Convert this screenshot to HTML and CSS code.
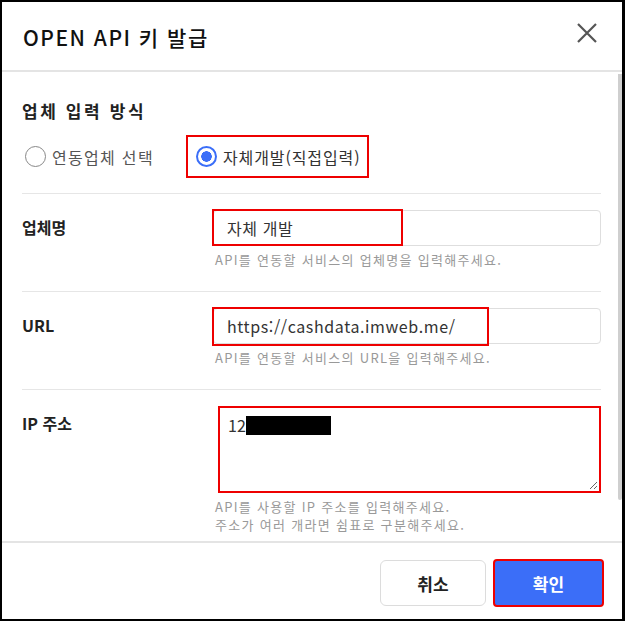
FILE: index.html
```html
<!DOCTYPE html>
<html lang="ko">
<head>
    <meta charset="UTF-8">
    <meta name="viewport" content="width=device-width, initial-scale=1.0">
    <title>OPEN API 키 발급</title>
    <link rel="stylesheet" href="styles.css">
</head>
<body>
    <div class="modal">
        <div class="modal-header">
            <h1>OPEN API 키 발급</h1>
            <button class="close-button" aria-label="닫기">
                <svg width="22" height="22" viewBox="0 0 22 22">
                    <path d="M2 2 L20 20 M20 2 L2 20" stroke="#555" stroke-width="2.2" fill="none"/>
                </svg>
            </button>
        </div>

        <div class="modal-body">
            <div class="body-inner">
                <div class="section">
                    <h2>업체 입력 방식</h2>
                    <div class="radio-group">
                        <label class="radio">
                            <span class="radio-circle"></span>
                            <span>연동업체 선택</span>
                        </label>
                        <label class="radio checked marked">
                            <span class="radio-circle"></span>
                            <span>자체개발(직접입력)</span>
                        </label>
                    </div>
                </div>

                <div class="form-row">
                    <div class="form-label">업체명</div>
                    <div class="form-field">
                        <div class="input-wrap">
                            <div class="input">자체 개발</div>
                            <span class="mark mark-name"></span>
                        </div>
                        <p class="help">API를 연동할 서비스의 업체명을 입력해주세요.</p>
                    </div>
                </div>

                <div class="form-row">
                    <div class="form-label">URL</div>
                    <div class="form-field">
                        <div class="input-wrap">
                            <div class="input">https://cashdata.imweb.me/</div>
                            <span class="mark mark-url"></span>
                        </div>
                        <p class="help">API를 연동할 서비스의 URL을 입력해주세요.</p>
                    </div>
                </div>

                <div class="form-row last">
                    <div class="form-label">IP 주소</div>
                    <div class="form-field">
                        <div class="textarea">
                            <span>12</span><span class="redacted"></span>
                            <svg class="resize" width="9" height="9" viewBox="0 0 9 9">
                                <path d="M8 1 L1 8 M8 5 L5 8" stroke="#666" stroke-width="1" fill="none"/>
                            </svg>
                        </div>
                        <p class="help">API를 사용할 IP 주소를 입력해주세요.<br>주소가 여러 개라면 쉼표로 구분해주세요.</p>
                    </div>
                </div>
            </div>
            <div class="scrollbar"><div class="thumb"></div></div>
        </div>

        <div class="modal-footer">
            <button class="btn btn-cancel">취소</button>
            <button class="btn btn-confirm">확인</button>
        </div>
    </div>
</body>
</html>
```

FILE: styles.css
```css
* {
    box-sizing: border-box;
}

body {
    margin: 0;
    padding: 0;
    background-color: #fff;
    font-family: "Noto Sans CJK KR", "Noto Sans", sans-serif;
    color: #222;
}

.modal {
    width: 625px;
    height: 621px;
    border: 2px solid #000;
    border-right-width: 3px;
    display: flex;
    flex-direction: column;
    background: #fff;
    overflow: hidden;
}

.modal-header {
    height: 70px;
    flex-shrink: 0;
    padding: 0 24px 0 21px;
    display: flex;
    align-items: center;
    justify-content: space-between;
    border-bottom: 2px solid #e4e4e4;
}

.modal-header h1 {
    margin: 0;
    font-size: 21px;
    font-weight: 500;
    letter-spacing: 1.5px;
    color: #111;
    padding-top: 1px;
}

.close-button {
    border: none;
    background: none;
    padding: 0;
    margin-bottom: 6px;
    display: flex;
    cursor: pointer;
}

.modal-body {
    flex: 1;
    display: flex;
    overflow: hidden;
}

.body-inner {
    flex: 1;
    padding: 0 17px 0 20px;
}

.scrollbar {
    width: 4px;
    padding-top: 2px;
}

.scrollbar .thumb {
    height: 426px;
    background-color: #cfcfcf;
    border-radius: 0 0 3px 3px;
}

.section {
    padding: 27px 0 15px;
    border-bottom: 1px solid #e6e6e6;
}

.section h2 {
    margin: 0;
    font-size: 17px;
    font-weight: bold;
    line-height: 24px;
    letter-spacing: 2.6px;
    color: #222;
}

.radio-group {
    display: flex;
    align-items: center;
    gap: 24px;
    margin-top: 12px;
}

.radio {
    display: flex;
    align-items: center;
    gap: 6px;
    height: 43px;
    padding: 0 8px 0 3px;
    font-size: 16px;
    color: #555;
    letter-spacing: 1.3px;
}

.radio.marked {
    border: 2px solid #e00;
    padding: 0 7px 0 8px;
    color: #333;
    letter-spacing: 0.9px;
}

.radio-circle {
    width: 21px;
    height: 21px;
    border-radius: 50%;
    border: 1.5px solid #888;
    background: #fff;
}

.radio.checked .radio-circle {
    border: 2px solid #3b6ef8;
    background: radial-gradient(circle, #3b6ef8 0, #3b6ef8 5px, #fff 5.5px);
}

.form-row {
    display: flex;
    padding: 16px 0 22px;
    border-bottom: 1px solid #e6e6e6;
}

.form-row.last {
    border-bottom: none;
    padding-bottom: 0;
}

.form-label {
    width: 191px;
    flex-shrink: 0;
    line-height: 34px;
    font-size: 16px;
    font-weight: bold;
    color: #222;
}

.form-field {
    flex: 1;
}

.input-wrap {
    position: relative;
}

.input {
    height: 36px;
    border: 1px solid #dedede;
    border-radius: 4px;
    padding: 0 13px;
    font-size: 16px;
    line-height: 34px;
    color: #333;
    letter-spacing: 0.6px;
}

.mark {
    position: absolute;
    border: 2px solid #e00;
    top: -1px;
    left: -1px;
}

.mark-name {
    width: 191px;
    height: 37px;
}

.mark-url {
    width: 277px;
    height: 39px;
}

.textarea {
    position: relative;
    height: 87px;
    margin-left: 5px;
    border: 2px solid #e00;
    padding: 5px 8px;
    font-size: 16px;
    line-height: 24px;
    color: #333;
    display: flex;
    align-items: flex-start;
}

.redacted {
    display: inline-block;
    width: 85px;
    height: 19px;
    margin-top: 3px;
    background: #000;
}

.resize {
    position: absolute;
    right: 1px;
    bottom: 1px;
}

.help {
    margin: 5px 0 0 2px;
    font-size: 13px;
    line-height: 18px;
    color: #999;
    letter-spacing: 1.3px;
}

.modal-footer {
    flex-shrink: 0;
    height: 78px;
    border-top: 2px solid #e4e4e4;
    display: flex;
    justify-content: flex-end;
    align-items: flex-start;
    gap: 7px;
    padding: 16px 18px 0 0;
}

.btn {
    height: 48px;
    font-family: "Noto Sans CJK KR", sans-serif;
    font-size: 17px;
    font-weight: bold;
    border-radius: 6px;
    cursor: pointer;
}

.btn-cancel {
    width: 106px;
    margin-top: 1px;
    height: 46px;
    background: #fff;
    border: 1px solid #dcdcdc;
    color: #222;
}

.btn-confirm {
    width: 111px;
    background: #3b6ef8;
    color: #fff;
    border: 2px solid #e00;
    border-radius: 4px;
}
```
